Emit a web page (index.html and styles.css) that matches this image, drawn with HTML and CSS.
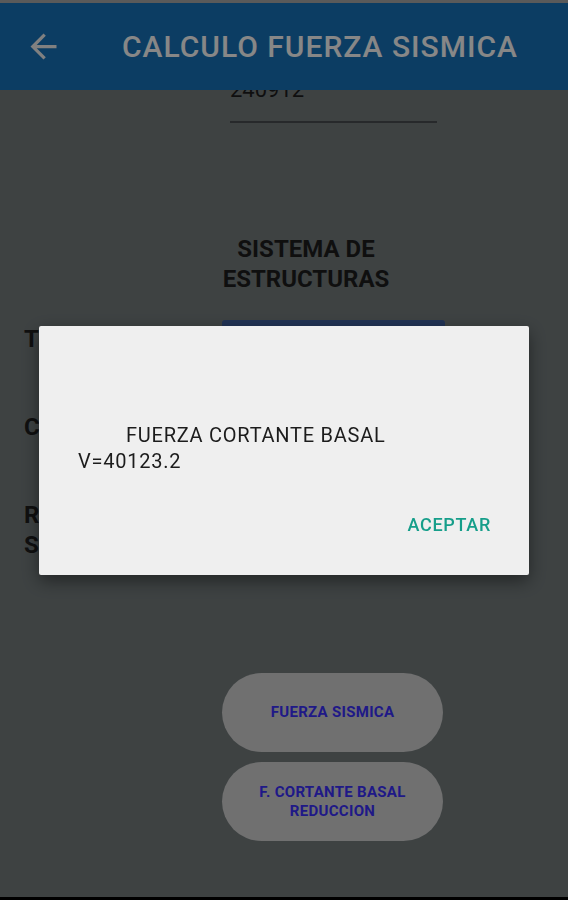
FILE: index.html
```html
<!DOCTYPE html>
<html lang="es">
<head>
    <meta charset="UTF-8">
    <meta name="viewport" content="width=device-width, initial-scale=1.0">
    <title>Calculo Fuerza Sismica</title>
    <link rel="stylesheet" href="styles.css">
</head>
<body>
    <div class="pantalla">
        <div class="barra-estado"></div>

        <header class="toolbar">
            <svg class="volver" viewBox="0 0 24 24" aria-hidden="true">
                <path d="M20 11H7.83l5.59-5.59L12 4l-8 8 8 8 1.41-1.41L7.83 13H20v-2z"/>
            </svg>
            <h1>CALCULO FUERZA SISMICA</h1>
        </header>

        <main class="contenido">
            <div class="fila-simple">
                <div class="campo">240912</div>
            </div>

            <div class="fila-simple">
                <h2 class="titulo-seccion">SISTEMA DE ESTRUCTURAS</h2>
            </div>

            <div class="filas">
                <div class="fila">
                    <span class="etiqueta">TIPO SUELO</span>
                    <div class="selector">S2</div>
                </div>
                <div class="fila">
                    <span class="etiqueta">CATEGORIA</span>
                    <div class="selector">C</div>
                </div>
                <div class="fila">
                    <span class="etiqueta">REGION<br>SISMICA</span>
                    <div class="selector">3</div>
                </div>
            </div>

            <div class="botones">
                <button class="boton">FUERZA SISMICA</button>
                <button class="boton">F. CORTANTE BASAL<br>REDUCCION</button>
            </div>
        </main>

        <div class="barra-nav"></div>
    </div>

    <!-- dialogo con el resultado -->
    <div class="velo">
        <div class="dialogo">
            <div class="mensaje">
                <div class="linea sangria">FUERZA CORTANTE BASAL</div>
                <div class="linea">V=40123.2</div>
            </div>
            <div class="acciones">
                <button class="aceptar">ACEPTAR</button>
            </div>
        </div>
    </div>
</body>
</html>
```

FILE: styles.css
```css
:root {
    --primario: #1773bb;
    --fondo: #757d7e;
    --texto: #1e1e1e;
    --acento: #169e8a;
    --boton-bg: #d3d3d3;
    --boton-texto: #3b30ff;
}

body {
    margin: 0;
    font-family: Roboto, "Noto Sans", sans-serif;
    background-color: var(--fondo);
    color: var(--texto);
}

.pantalla {
    height: 900px;
    display: flex;
    flex-direction: column;
    overflow: hidden;
}

.barra-estado {
    height: 3px;
    background-color: #aaaaaa;
    flex-shrink: 0;
}

.toolbar {
    position: relative;
    z-index: 1;
    height: 87px;
    flex-shrink: 0;
    display: flex;
    align-items: center;
    padding-left: 24px;
    background-color: var(--primario);
}

.volver {
    width: 39px;
    height: 39px;
    fill: #f2f2f2;
    margin-right: 59px;
}

.toolbar h1 {
    margin: 0;
    font-size: 30px;
    font-weight: 500;
    letter-spacing: 1px;
    color: #fff;
}

.contenido {
    flex: 1;
    overflow: hidden;
    padding-left: 24px;
}

/* la vista esta desplazada un poco hacia arriba */
.fila-simple {
    margin-left: 198px;
    width: 223px;
}

.fila-simple:first-child {
    margin-top: -13px;
}

.campo {
    margin: 0 8px;
    font-size: 22px;
    line-height: 26px;
    padding-bottom: 18px;
    border-bottom: 2px solid #4b4f51;
}

.titulo-seccion {
    width: 168px;
    margin: 111px 0 0;
    font-size: 24px;
    line-height: 30px;
    font-weight: 700;
    text-align: center;
}

.filas {
    margin-top: 26px;
    display: flex;
    flex-direction: column;
    gap: 44px;
}

.fila {
    display: grid;
    grid-template-columns: 198px 223px;
    align-items: start;
}

.etiqueta {
    padding-top: 4px;
    font-size: 24px;
    line-height: 30px;
    font-weight: 700;
    white-space: nowrap;
}

.selector {
    height: 44px;
    border-radius: 3px;
    background-color: #3f5f9f;
    color: #fff;
    font-size: 18px;
    line-height: 44px;
    padding-left: 12px;
}

.botones {
    margin: 113px 0 0 198px;
    width: 221px;
    display: flex;
    flex-direction: column;
    gap: 10px;
}

.boton {
    height: 79px;
    border: none;
    border-radius: 40px;
    background-color: var(--boton-bg);
    color: var(--boton-texto);
    font-family: Roboto, sans-serif;
    font-size: 15px;
    line-height: 19px;
    font-weight: 700;
    letter-spacing: 0.3px;
}

.barra-nav {
    height: 3px;
    flex-shrink: 0;
    background-color: #000;
}

.velo {
    position: fixed;
    inset: 0;
    z-index: 10;
    background-color: rgba(0, 0, 0, 0.47);
    display: flex;
    justify-content: center;
    align-items: center;
}

.dialogo {
    width: 490px;
    box-sizing: border-box;
    padding: 96px 38px 39px 39px;
    background-color: #efefef;
    border-radius: 2px;
    box-shadow: 0 6px 18px rgba(0, 0, 0, 0.45);
}

.mensaje {
    font-size: 20px;
    line-height: 26px;
    letter-spacing: 0.75px;
    color: #1c1c1c;
}

.sangria {
    padding-left: 48px;
}

.acciones {
    margin-top: 40px;
    display: flex;
    justify-content: flex-end;
}

.aceptar {
    padding: 0;
    border: none;
    background: none;
    color: var(--acento);
    font-family: Roboto, sans-serif;
    font-size: 18px;
    line-height: 22px;
    font-weight: 500;
    letter-spacing: 0.7px;
}
```
